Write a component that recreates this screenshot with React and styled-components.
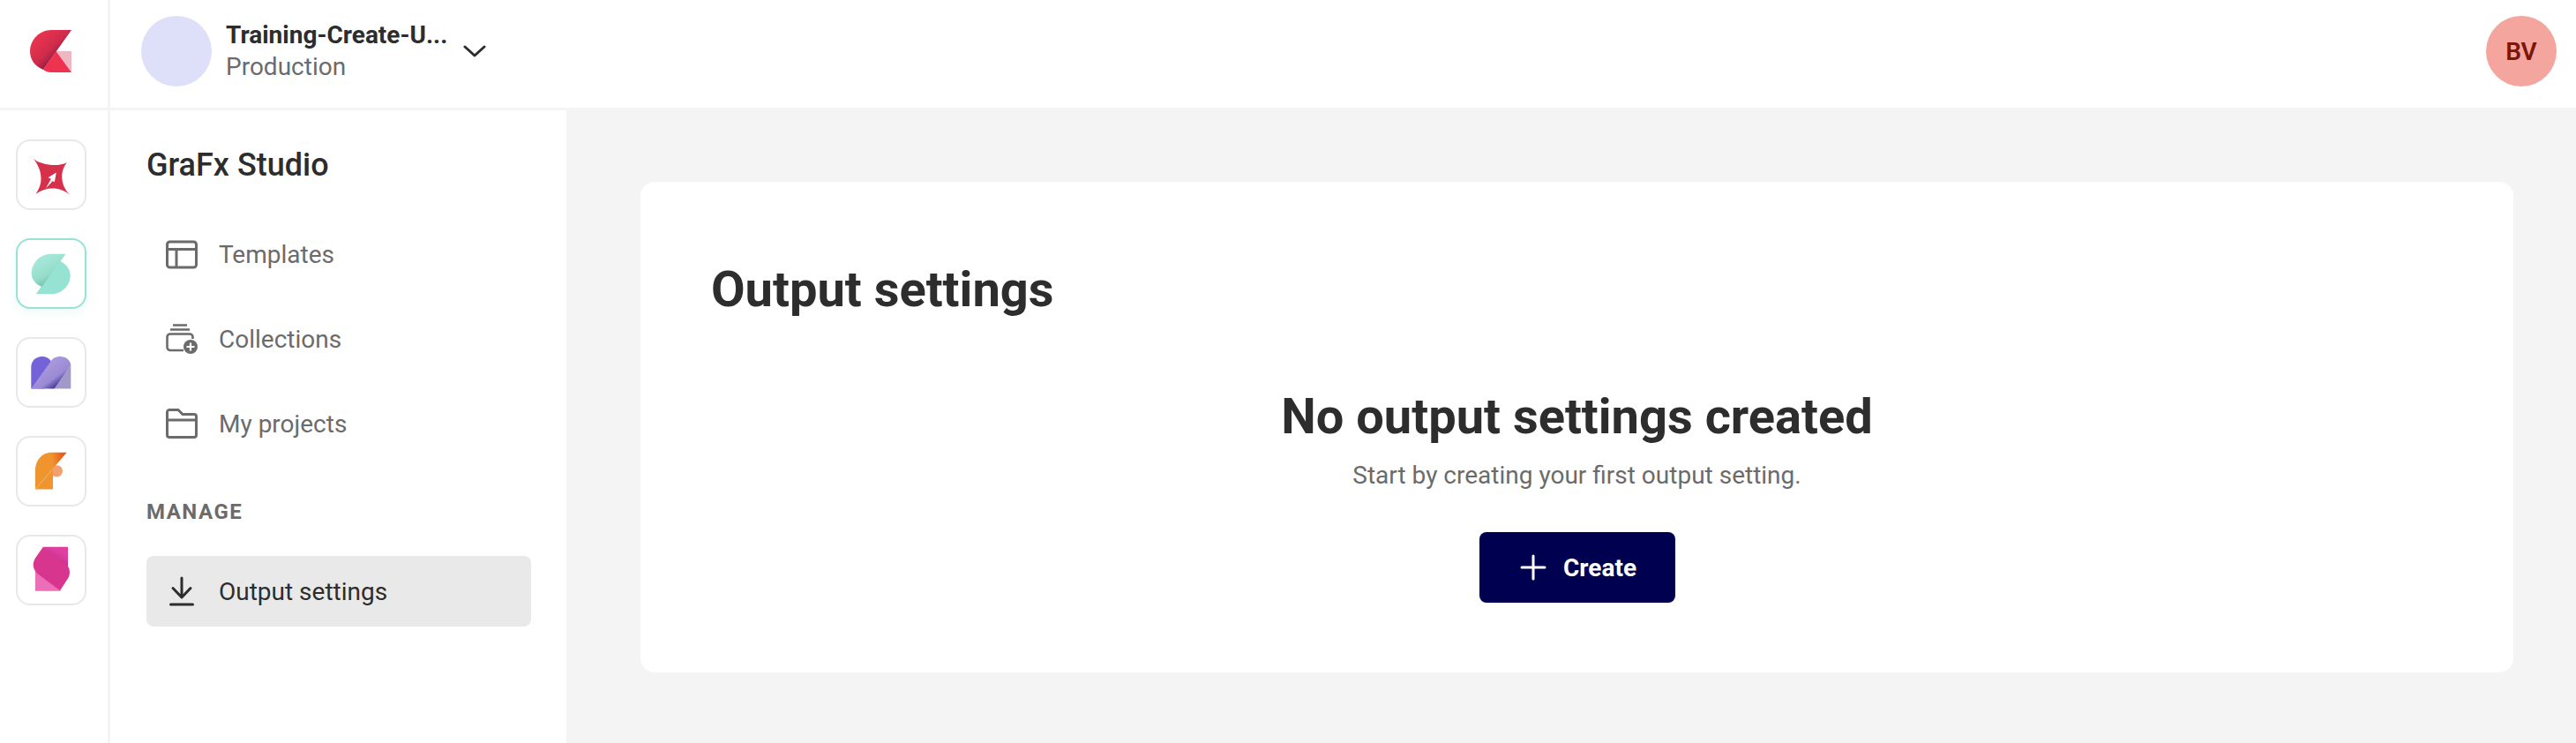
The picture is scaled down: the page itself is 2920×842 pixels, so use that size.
import styled, { createGlobalStyle } from "styled-components"

const GlobalStyle = createGlobalStyle`
    * {
        box-sizing: border-box;
    }
    html, body {
        margin: 0;
        padding: 0;
        background: #fff;
    }
    body {
        font-family: Roboto, "Liberation Sans", sans-serif;
        color: #2d2d2d;
    }
`

function ChiliLogo() {
    return (
        <svg width="47" height="48" viewBox="0 0 47 48">
            <defs>
                <linearGradient id="logoRed" x1="0.2" y1="0.25" x2="0.68" y2="0.72">
                    <stop offset="0" stopColor="#e5334f" />
                    <stop offset="0.55" stopColor="#d02b4b" />
                    <stop offset="1" stopColor="#8c1c40" />
                </linearGradient>
            </defs>
            <path d="M29.5 24H47V48Z" fill="#edb8c2" />
            <path d="M24 0H47L15 45C5 41 0 33 0 24C0 11 11 0 24 0Z" fill="url(#logoRed)" />
            <path d="M29.5 24L47 48H24C20 48 18 47 15 45Z" fill="#ee3350" />
        </svg>
    )
}

function StarLogo() {
    return (
        <svg width="45" height="45" viewBox="16 16 136 136">
            <path d="M22 28C45 48 105 58 137 40C115 65 108 115 150 155C120 125 70 120 30 148C55 115 55 70 22 28Z" fill="#d7304b" />
            <path d="M100 75L72 92L82 97L64 130L88 104L94 108Z" fill="#fff" />
        </svg>
    )
}

function StudioLogo() {
    return (
        <svg width="46" height="47" viewBox="106 439 138 141">
            <defs>
                <linearGradient id="studioTop" gradientUnits="userSpaceOnUse" x1="125" y1="475" x2="165" y2="548">
                    <stop offset="0" stopColor="#a4e6d8" />
                    <stop offset="0.6" stopColor="#94dcca" />
                    <stop offset="1" stopColor="#6cbfa9" />
                </linearGradient>
            </defs>
            <path d="M123 578H175C212 578 240 549 240 515C240 495 228 477 205 465Z" fill="#96e3d3" />
            <path d="M225 441H175C138 441 108 471 108 508C108 527 122 545 143 553Z" fill="url(#studioTop)" />
        </svg>
    )
}

function MediaLogo() {
    return (
        <svg width="46" height="38" viewBox="104 127 140 114">
            <defs>
                <linearGradient id="mediaBand" x1="0.35" y1="0.35" x2="0.75" y2="0.8">
                    <stop offset="0" stopColor="#a897dc" />
                    <stop offset="0.65" stopColor="#9a8ad4" />
                    <stop offset="1" stopColor="#4f3fa0" />
                </linearGradient>
            </defs>
            <path d="M105 240V165C105 144 122 129 142 129C158 129 170 137 176 150L150 240Z" fill="#7362d8" />
            <path d="M242 160V240H185Z" fill="#a199c8" />
            <path d="M105 240L170 150C176 137 190 129 205 129C226 129 242 144 242 160L185 240Z" fill="url(#mediaBand)" />
        </svg>
    )
}

function FormLogo() {
    return (
        <svg width="40" height="47" viewBox="24 35 120 140">
            <defs>
                <linearGradient id="formTop" gradientUnits="userSpaceOnUse" x1="85" y1="55" x2="125" y2="48">
                    <stop offset="0" stopColor="#f09430" />
                    <stop offset="1" stopColor="#e8571a" />
                </linearGradient>
            </defs>
            <circle cx="103" cy="103" r="20" fill="#f4a06e" />
            <path d="M30 165H90V95Z" fill="#f09430" />
            <path d="M30 165V100C30 68 52 40 85 40H137Z" fill="url(#formTop)" />
            <path d="M30 165L90 96" stroke="#f6b880" strokeWidth="1.5" />
        </svg>
    )
}

function LeafLogo() {
    return (
        <svg width="45" height="54" viewBox="16 30 136 162">
            <defs>
                <linearGradient id="leafTop" gradientUnits="userSpaceOnUse" x1="115" y1="50" x2="95" y2="85">
                    <stop offset="0" stopColor="#e03f9f" />
                    <stop offset="0.5" stopColor="#d0389a" />
                    <stop offset="1" stopColor="#a42a80" />
                </linearGradient>
            </defs>
            <path d="M28 100V183H115L70 130Z" fill="#ec6db8" />
            <path d="M55 32H140V105Z" fill="url(#leafTop)" />
            <path d="M55 32L128 85C148 100 150 122 140 140L113 181L38 125C20 110 16 90 28 70Z" fill="#d8358f" />
        </svg>
    )
}

function TemplatesIcon() {
    return (
        <svg width="36" height="36" viewBox="0 0 36 36" fill="none" stroke="currentColor" strokeWidth="3">
            <rect x="1.5" y="4" width="33" height="29" rx="3" />
            <path d="M1.5 12.5H34.5M12 12.5V33" />
        </svg>
    )
}

function CollectionsIcon() {
    return (
        <svg width="36" height="36" viewBox="0 0 36 36" fill="none" stroke="currentColor" strokeWidth="2.6">
            <path d="M8 2.5H24M5 7.5H27" />
            <path d="M20 31H5A3.5 3.5 0 0 1 1.5 27.5V16A3.5 3.5 0 0 1 5 12.5H27A3.5 3.5 0 0 1 30.5 16V18" />
            <circle cx="28" cy="27" r="8" fill="currentColor" stroke="none" />
            <path d="M28 22.5V31.5M23.5 27H32.5" stroke="#fff" strokeWidth="2.2" />
        </svg>
    )
}

function FolderIcon() {
    return (
        <svg width="36" height="36" viewBox="0 0 36 36" fill="none" stroke="currentColor" strokeWidth="3">
            <path d="M1.5 5A2.5 2.5 0 0 1 4 2.5H14L19 7.5H32A2.5 2.5 0 0 1 34.5 10V31A2.5 2.5 0 0 1 32 33.5H4A2.5 2.5 0 0 1 1.5 31Z" />
            <path d="M1.5 14H34.5" />
        </svg>
    )
}

function DownloadIcon() {
    return (
        <svg width="36" height="36" viewBox="0 0 36 36" fill="none" stroke="currentColor" strokeWidth="3" strokeLinecap="round" strokeLinejoin="round">
            <path d="M18 3V24M8 14.5L18 25L28 14.5" />
            <path d="M5.5 33H30.5" />
        </svg>
    )
}

const products = [
    { name: "Publisher", logo: <StarLogo /> },
    { name: "Studio", logo: <StudioLogo />, active: true },
    { name: "Media", logo: <MediaLogo /> },
    { name: "Form", logo: <FormLogo /> },
    { name: "Leaf", logo: <LeafLogo /> },
]

const navItems = [
    { label: "Templates", icon: <TemplatesIcon /> },
    { label: "Collections", icon: <CollectionsIcon /> },
    { label: "My projects", icon: <FolderIcon /> },
]

export default function App() {
    return (
        <Page>
            <GlobalStyle />
            <TopBar>
                <LogoCell>
                    <ChiliLogo />
                </LogoCell>
                <Workspace>
                    <WorkspaceAvatar />
                    <WorkspaceText>
                        <WorkspaceName>Training-Create-U...</WorkspaceName>
                        <WorkspaceEnv>Production</WorkspaceEnv>
                    </WorkspaceText>
                    <svg width="26" height="14" viewBox="0 0 26 14" fill="none" stroke="#2d2d2d" strokeWidth="3" strokeLinecap="round" strokeLinejoin="round">
                        <path d="M2 2L13 12L24 2" />
                    </svg>
                </Workspace>
                <UserAvatar>BV</UserAvatar>
            </TopBar>
            <Body>
                <Rail>
                    {products.map((p) => (
                        <ProductButton key={p.name} $active={p.active} aria-label={p.name}>
                            {p.logo}
                        </ProductButton>
                    ))}
                </Rail>
                <Sidebar>
                    <SidebarTitle>GraFx Studio</SidebarTitle>
                    <NavList>
                        {navItems.map((item) => (
                            <NavItem key={item.label}>
                                {item.icon}
                                {item.label}
                            </NavItem>
                        ))}
                    </NavList>
                    <SectionLabel>MANAGE</SectionLabel>
                    <NavItem $active>
                        <DownloadIcon />
                        Output settings
                    </NavItem>
                </Sidebar>
                <Main>
                    <Card>
                        <CardTitle>Output settings</CardTitle>
                        <Empty>
                            <EmptyTitle>No output settings created</EmptyTitle>
                            <EmptyText>Start by creating your first output setting.</EmptyText>
                            <CreateButton>
                                <svg width="30" height="30" viewBox="0 0 30 30" fill="none" stroke="#fff" strokeWidth="3" strokeLinecap="round">
                                    <path d="M15 2V28M2 15H28" />
                                </svg>
                                Create
                            </CreateButton>
                        </Empty>
                    </Card>
                </Main>
            </Body>
        </Page>
    )
}

const Page = styled.div`
    width: 2920px;
    height: 842px;
    display: flex;
    flex-direction: column;
    overflow: hidden;
`

const TopBar = styled.header`
    height: 125px;
    display: flex;
    align-items: center;
    padding-right: 22px;
    border-bottom: 3px solid #f4f4f4;
`

const LogoCell = styled.div`
    width: 125px;
    height: 122px;
    display: flex;
    align-items: center;
    padding: 0 0 6px 34px;
    border-right: 3px solid #f4f4f4;
`

const Workspace = styled.div`
    display: flex;
    align-items: center;
    height: 116px;
    align-self: flex-start;
    padding-left: 35px;
    flex: 1;
`

const WorkspaceAvatar = styled.div`
    width: 80px;
    height: 80px;
    border-radius: 50%;
    background: #dedff8;
    margin-right: 16px;
`

const WorkspaceText = styled.div`
    width: 269px;
    display: flex;
    flex-direction: column;
    font-size: 28px;
    line-height: 36px;
`

const WorkspaceName = styled.span`
    font-weight: 700;
    color: #2d2d2d;
    white-space: nowrap;
`

const WorkspaceEnv = styled.span`
    font-weight: 400;
    color: #6b6b6b;
`

const UserAvatar = styled.div`
    width: 80px;
    height: 80px;
    margin-bottom: 6px;
    border-radius: 50%;
    background: #f4a69e;
    color: #7a1508;
    font-size: 28px;
    font-weight: 600;
    display: flex;
    align-items: center;
    justify-content: center;
`

const Body = styled.div`
    flex: 1;
    display: flex;
    min-height: 0;
`

const Rail = styled.nav`
    width: 125px;
    display: flex;
    flex-direction: column;
    gap: 32px;
    padding: 33px 0 0 18px;
    border-right: 3px solid #f4f4f4;
`

const ProductButton = styled.div`
    width: 80px;
    height: 80px;
    border-radius: 16px;
    display: flex;
    align-items: center;
    justify-content: center;
    background: #fff;
    border: 2px solid ${(p) => (p.$active ? "#96e3d3" : "#e8e8e8")};
    box-shadow: ${(p) => (p.$active ? "0 4px 12px rgba(150, 227, 211, 0.18)" : "none")};
    svg {
        flex: none;
    }
`

const Sidebar = styled.aside`
    width: 517px;
    padding: 40px 40px 0 41px;
`

const SidebarTitle = styled.h1`
    margin: 0;
    font-size: 36px;
    line-height: 44px;
    font-weight: 500;
    color: #2d2d2d;
`

const NavList = styled.div`
    margin-top: 39px;
    display: flex;
    flex-direction: column;
    gap: 16px;
`

const NavItem = styled.div`
    height: 80px;
    display: flex;
    align-items: center;
    gap: 24px;
    padding-left: 22px;
    border-radius: 8px;
    font-size: 28px;
    color: ${(p) => (p.$active ? "#2d2d2d" : "#6b6b6b")};
    background: ${(p) => (p.$active ? "#e9e9e9" : "transparent")};
    svg {
        flex: none;
    }
`

const SectionLabel = styled.div`
    margin: 45px 0 35px;
    font-size: 24px;
    line-height: 30px;
    font-weight: 700;
    letter-spacing: 1.5px;
    color: #6b6b6b;
`

const Main = styled.main`
    flex: 1;
    background: #f4f4f4;
    padding: 81px 71px 80px 84px;
`

const Card = styled.section`
    height: 556px;
    background: #fff;
    border-radius: 16px;
    padding: 90px 80px 0;
`

const CardTitle = styled.h2`
    margin: 0;
    font-size: 56px;
    line-height: 64px;
    font-weight: 700;
    color: #2d2d2d;
`

const Empty = styled.div`
    margin-top: 80px;
    display: flex;
    flex-direction: column;
    align-items: center;
`

const EmptyTitle = styled.h3`
    margin: 0;
    font-size: 56px;
    line-height: 64px;
    font-weight: 700;
    color: #2d2d2d;
`

const EmptyText = styled.p`
    margin: 15px 0 0;
    font-size: 28px;
    line-height: 40px;
    color: #6b6b6b;
`

const CreateButton = styled.button`
    margin-top: 44px;
    width: 222px;
    height: 80px;
    border: 0;
    border-radius: 8px;
    background: #000050;
    color: #fff;
    font-family: inherit;
    font-size: 28px;
    font-weight: 700;
    display: flex;
    align-items: center;
    justify-content: center;
    gap: 19px;
    padding-left: 9px;
`
